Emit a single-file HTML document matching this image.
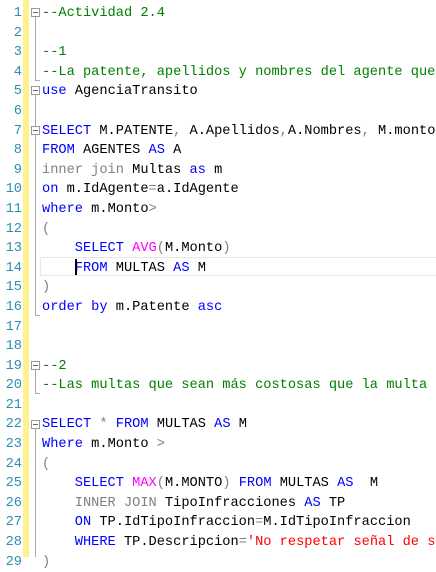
<html><head><style>
body{margin:0;width:436px;height:557px;overflow:hidden;background:#fff;position:relative;font-family:"Liberation Mono",monospace;font-size:13.67px}
#nums{position:absolute;left:0;top:4px;width:22px;text-align:right;color:#2b91af;line-height:19.6px;white-space:pre}
#bar{position:absolute;left:23px;top:0;width:6px;height:557px;background:#fdf28c}
#code{position:absolute;left:42px;top:4px;line-height:19.6px;white-space:pre;color:#000}
.k{color:#0000ff}.c{color:#008000}.g{color:#808080}.f{color:#ff00ff}.s{color:#ff0000}
.box{position:absolute;left:31px;width:9px;height:9px;border:1px solid #999;background:#fff;box-sizing:border-box}
.box:after{content:"";position:absolute;left:1px;top:3px;width:5px;height:1px;background:#666}
.vl{position:absolute;left:35px;width:1px;background:#aaa}
.tk{position:absolute;left:35px;width:5px;height:1px;background:#aaa}
#cur{position:absolute;left:40px;top:257px;width:400px;height:19px;border:1px solid #e6e6e6;box-sizing:border-box}
#caret{position:absolute;left:75px;top:259px;width:1.5px;height:16px;background:#000}
</style></head><body>
<div id="bar"></div>
<div id="nums">1
2
3
4
5
6
7
8
9
10
11
12
13
14
15
16
17
18
19
20
21
22
23
24
25
26
27
28
29</div>
<div id="cur"></div>
<div class="box" style="top:8px"></div><div class="vl" style="top:17px;height:63px"></div><div class="tk" style="top:80px"></div>
<div class="box" style="top:86px"></div><div class="vl" style="top:95px;height:31px"></div>
<div class="box" style="top:126px"></div><div class="vl" style="top:135px;height:180px"></div><div class="tk" style="top:315px"></div>
<div class="box" style="top:361px"></div><div class="vl" style="top:370px;height:23px"></div><div class="tk" style="top:393px"></div>
<div class="box" style="top:420px"></div><div class="vl" style="top:429px;height:128px"></div>
<div id="code"><span class="c">--Actividad 2.4</span>

<span class="c">--1</span>
<span class="c">--La patente, apellidos y nombres del agente que</span>
<span class="k">use</span> AgenciaTransito

<span class="k">SELECT</span> M.PATENTE<span class="g">,</span> A.Apellidos<span class="g">,</span>A.Nombres<span class="g">,</span> M.monto
<span class="k">FROM</span> AGENTES <span class="k">AS</span> A
<span class="g">inner join</span> Multas <span class="k">as</span> m
<span class="k">on</span> m.IdAgente<span class="g">=</span>a.IdAgente
<span class="k">where</span> m.Monto<span class="g">&gt;</span>
<span class="g">(</span>
    <span class="k">SELECT</span> <span class="f">AVG</span><span class="g">(</span>M.Monto<span class="g">)</span>
    <span class="k">FROM</span> MULTAS <span class="k">AS</span> M
<span class="g">)</span>
<span class="k">order by</span> m.Patente <span class="k">asc</span>


<span class="c">--2</span>
<span class="c">--Las multas que sean más costosas que la multa</span>

<span class="k">SELECT</span> <span class="g">*</span> <span class="k">FROM</span> MULTAS <span class="k">AS</span> M
<span class="k">Where</span> m.Monto <span class="g">&gt;</span>
<span class="g">(</span>
    <span class="k">SELECT</span> <span class="f">MAX</span><span class="g">(</span>M.MONTO<span class="g">)</span> <span class="k">FROM</span> MULTAS <span class="k">AS</span>  M
    <span class="g">INNER JOIN</span> TipoInfracciones <span class="k">AS</span> TP
    <span class="k">ON</span> TP.IdTipoInfraccion<span class="g">=</span>M.IdTipoInfraccion
    <span class="k">WHERE</span> TP.Descripcion<span class="g">=</span><span class="s">'No respetar señal de s</span>
<span class="g">)</span></div>
<div id="caret"></div>
</body></html>
